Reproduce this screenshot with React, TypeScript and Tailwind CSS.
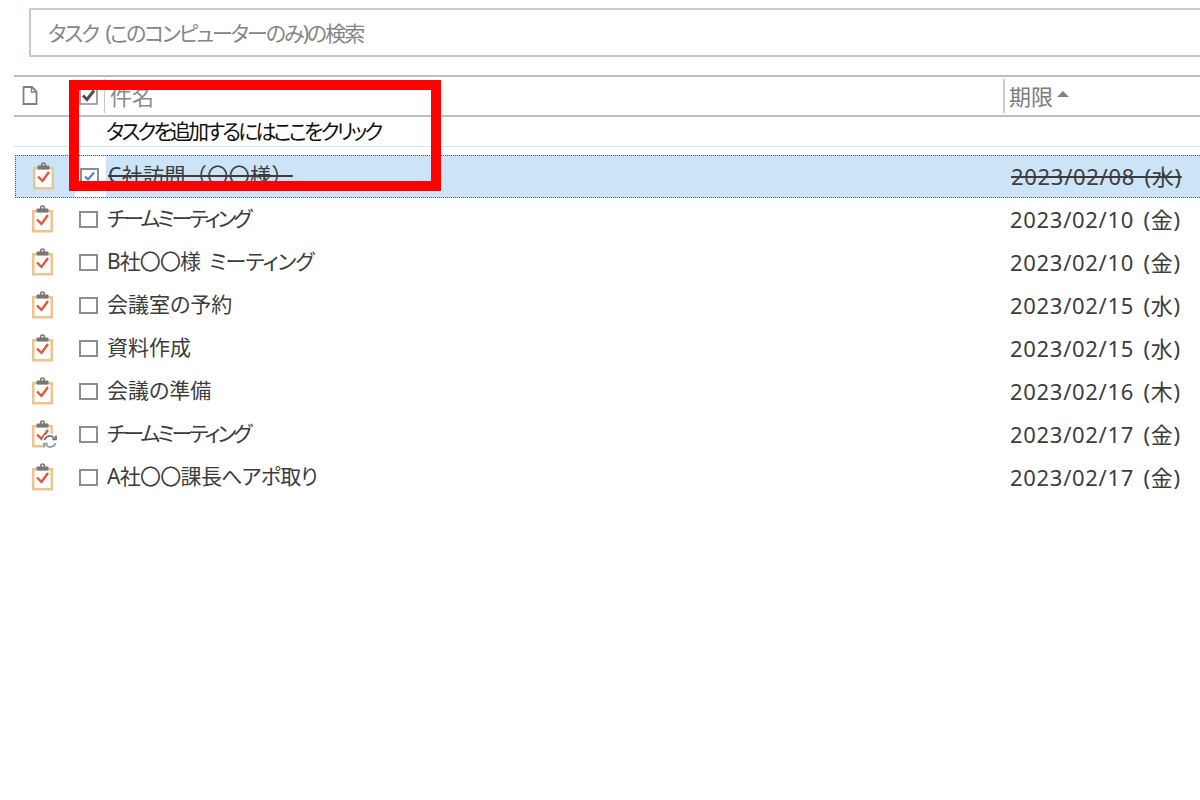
const tasks = [
  { name: "C社訪問（〇〇様）", due: "2023/02/08 (水)", done: true, cls: "tracking-[0.4px] [font-feature-settings:normal]" },
  { name: "チームミーティング", due: "2023/02/10 (金)", cls: "tracking-[-2.9px]" },
  { name: "B社〇〇様  ミーティング", due: "2023/02/10 (金)", cls: "tracking-[-0.9px]" },
  { name: "会議室の予約", due: "2023/02/15 (水)", cls: "" },
  { name: "資料作成", due: "2023/02/15 (水)", cls: "" },
  { name: "会議の準備", due: "2023/02/16 (木)", cls: "" },
  { name: "チームミーティング", due: "2023/02/17 (金)", recurring: true, cls: "tracking-[-2.9px]" },
  { name: "A社〇〇課長へアポ取り", due: "2023/02/17 (金)", cls: "tracking-[-0.7px]" },
];

function TaskIcon({ recurring }: { recurring?: boolean }) {
  return (
    <svg width="26" height="30" viewBox="0 0 26 30" className="block">
      <rect x="1.25" y="6.25" width="18.5" height="20" fill="#fff" stroke="#ecc48e" strokeWidth="2.5" />
      <rect x="4.5" y="3.5" width="12" height="4" rx="1" fill="#77777a" />
      <circle cx="10.5" cy="2.8" r="1.9" fill="none" stroke="#77777a" strokeWidth="1.5" />
      <path d="M5 14.5l4.5 4.5 6.5-9" fill="none" stroke="#e2573a" strokeWidth="2.4" />
      {recurring && (
        <g fill="none" stroke="#707478" strokeWidth="1.8">
          <circle cx="18" cy="21.5" r="8" fill="#fff" stroke="none" />
          <path d="M12.5 20a5.6 5.6 0 0 1 10-1.6" />
          <path d="M23.5 23a5.6 5.6 0 0 1-10 1.6" stroke="#9aa0a6" />
          <path d="M24 15.5v3.8h-3.8" />
          <path d="M12 27.500v-3.800h3.800" stroke="#9aa0a6" />
        </g>
      )}
    </svg>
  );
}

function Check({ checked }: { checked?: boolean }) {
  return (
    <svg width="19" height="17" viewBox="0 0 19 17" className="block">
      <rect x="1" y="1" width="17" height="15" fill="#fff" stroke="#8e8e8e" strokeWidth="2" />
      {checked && <path d="M5 8.5l3 3 6-7" fill="none" stroke="#4c86c6" strokeWidth="2.2" />}
    </svg>
  );
}

export default function App() {
  return (
    <div
      className="relative w-[1200px] h-[800px] overflow-hidden bg-white pt-[8px] text-[#3c3c3c] text-[21px] [font-feature-settings:'palt']"
      style={{ fontFamily: '"Noto Sans", "Noto Sans CJK JP", sans-serif' }}
    >
      <div className="ml-[29px] w-[1200px] h-[49px] border-2 border-[#c3cad4] flex items-center pl-[17px] pt-[3px] text-[#858585] tracking-[-2px] [word-spacing:4px] whitespace-pre">
        タスク (このコンピューターのみ)の検索
      </div>

      <div className="mt-[18px] ml-[14px] h-[42px] border-y-2 border-[#b9bec7] flex items-center">
        <div className="w-[59px] h-full flex items-center pl-[8px] pb-[1px]">
          <svg width="16" height="19" viewBox="0 0 16 19">
            <path d="M1.5 1h8.5l4.5 4.5V18h-13z" fill="#fff" stroke="#808080" strokeWidth="1.8" />
            <path d="M9.500 1v5h5" fill="none" stroke="#808080" strokeWidth="1.5" />
          </svg>
        </div>
        <div className="w-[31px] h-[34px] border-l border-[#dcdfe4] flex items-center pl-[5px]">
          <svg width="19" height="18" viewBox="0 0 19 18">
            <path d="M1 1h17v16H1z" fill="#fff" stroke="#8e8e8e" strokeWidth="1.6" />
            <path d="M4 8.500l4 4 7-9" fill="none" stroke="#505050" strokeWidth="3" />
          </svg>
        </div>
        <div className="w-[899px] h-[34px] border-l border-[#c3cad4] flex items-center pl-[5px] text-[22px] text-[#8a8a8a]">件名</div>
        <div className="h-[34px] border-l-2 border-[#c9cdd2] flex items-center pl-[4px] text-[22px] text-[#7d7d7d]">
          期限
          <svg width="12" height="6" viewBox="0 0 12 6" className="ml-[4px] mb-[4px]">
            <path d="M0 6l6-6 6 6z" fill="#808080" />
          </svg>
        </div>
      </div>

      <div className="ml-[14px] h-[30px] border-b border-[#cfe6f7] flex items-center pl-[92px] text-[#111] tracking-[-2.9px]">
        タスクを追加するにはここをクリック
      </div>

      <div className="mt-[8px] ml-[1px]">
        {tasks.map((t, i) => (
          <div
            key={i}
            className={`h-[43px] flex items-center ml-[14px] ${t.done ? "border-y border-l border-dotted border-[#555] bg-[#cce4f7]" : ""}`}
          >
            <div className="w-[59px] pl-[17px] flex items-center">
              <TaskIcon recurring={t.recurring} />
            </div>
            <div className={`w-[31px] h-full pl-[5px] flex items-center ${t.done ? "bg-white" : ""}`}>
              <Check checked={t.done} />
            </div>
            <div className={`w-[904px] whitespace-pre pl-[2px] pb-[1px] ${t.done ? "line-through" : ""} ${t.cls}`}>{t.name}</div>
            <div className={`pl-[1px] whitespace-pre text-[22px] tracking-[0.7px] [word-spacing:3px] [font-feature-settings:normal] ${t.done ? "line-through" : ""}`}>{t.due}</div>
          </div>
        ))}
      </div>

      <div className="absolute left-[69px] top-[80px] w-[372px] h-[111px] border-[10px] border-[#ff0000]" />
    </div>
  );
}
